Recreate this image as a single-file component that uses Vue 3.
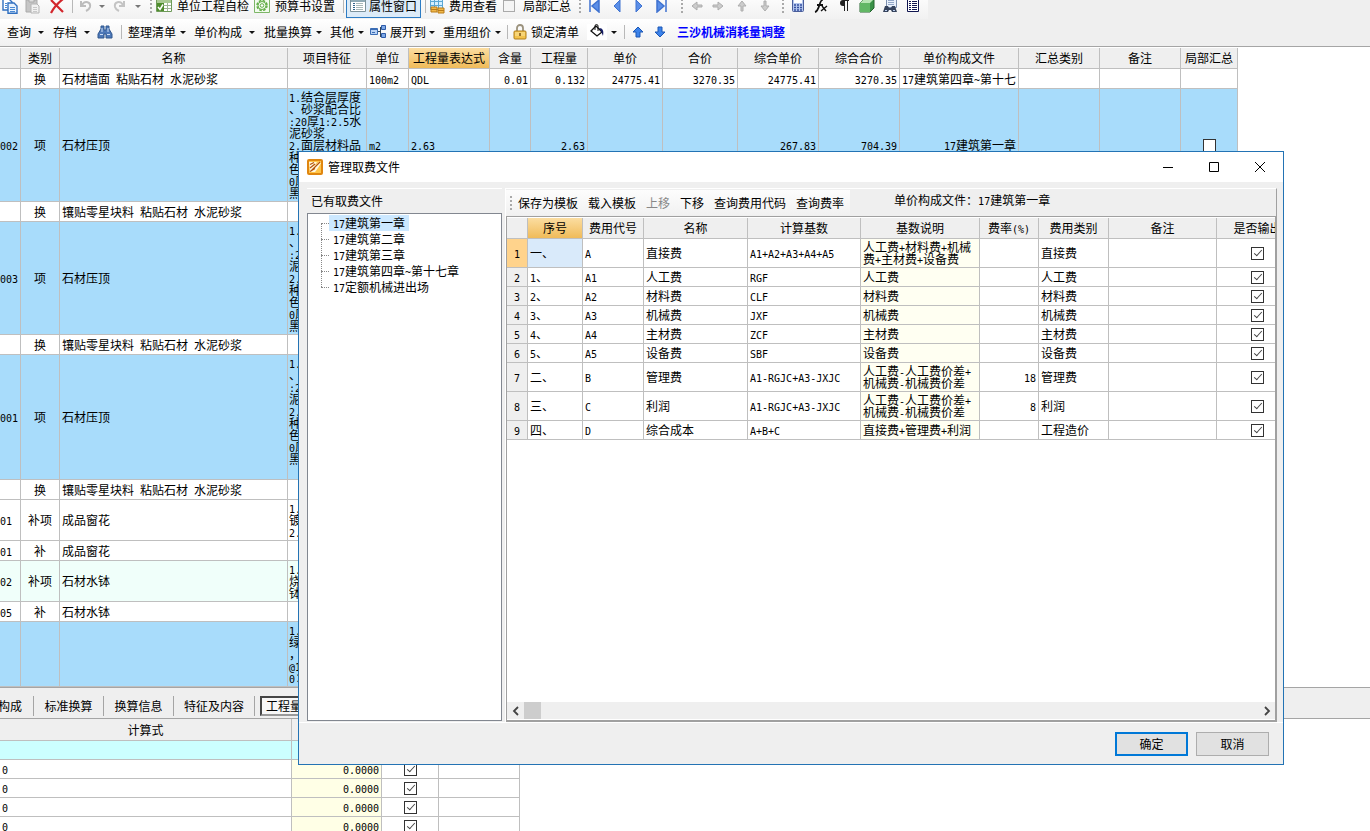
<script setup>
import { h, ref } from 'vue'

// Sets runs of Latin characters in a half-width face beside the full-width CJK text.
const Mix = (props) =>
  String(props.text ?? '')
    .split(/([\x20-\x7e]+)/)
    .filter(Boolean)
    .map((part) => (/^[\x20-\x7e]/.test(part) ? h('span', { class: 'latin' }, part) : part))
Mix.props = ['text']

const mainCols = ['', '类别', '名称', '项目特征', '单位', '工程量表达式', '含量', '工程量', '单价', '合价', '综合单价', '综合合价', '单价构成文件', '汇总类别', '备注', '局部汇总']
const feature = ['1.结合层厚度', '、砂浆配合比', ':20厚1:2.5水', '泥砂浆', '2.面层材料品', '种', '色', '0厚', '黑']
const item = (code, kind, name, cls, lines = [], rest = {}) => ({ code, kind, name, cls, lines, rest })
const mainRows = [
  item('', '换', '石材墙面 粘贴石材 水泥砂浆', 'h20', [], { unit: '100m2', expr: 'QDL', rate: '0.01', qty: '0.132', price: '24775.41', total: '3270.35', cprice: '24775.41', ctotal: '3270.35', file: '17建筑第四章~第十七' }),
  item('002', '项', '石材压顶', 'h113 blue', feature, { unit: 'm2', expr: '2.63', qty: '2.63', cprice: '267.83', ctotal: '704.39', file: '17建筑第一章', box: true }),
  item('', '换', '镶贴零星块料 粘贴石材 水泥砂浆', 'h20'),
  item('003', '项', '石材压顶', 'h113 blue', feature),
  item('', '换', '镶贴零星块料 粘贴石材 水泥砂浆', 'h20'),
  item('001', '项', '石材压顶', 'h125 blue', feature),
  item('', '换', '镶贴零星块料 粘贴石材 水泥砂浆', 'h20'),
  item('01', '补项', '成品窗花', 'h41', ['1.', '镀', '2.']),
  item('01', '补', '成品窗花', 'h20'),
  item('02', '补项', '石材水钵', 'h41 mint', ['1.', '烧', '钵']),
  item('05', '补', '石材水钵', 'h20'),
  item('', '', '', 'h64 blue', ['1.', '绿', '，', '@1', '0×'])
]

const files = ['17建筑第一章', '17建筑第二章', '17建筑第三章', '17建筑第四章~第十七章', '17定额机械进出场']
const selectedFile = ref(0)

const feeCols = ['', '序号', '费用代号', '名称', '计算基数', '基数说明', '费率(%)', '费用类别', '备注', '是否输出']
const fees = ref([
  { no: '一、', code: 'A', name: '直接费', base: 'A1+A2+A3+A4+A5', note: ['人工费+材料费+机械', '费+主材费+设备费'], rate: '', kind: '直接费', out: true },
  { no: '1、', code: 'A1', name: '人工费', base: 'RGF', note: ['人工费'], rate: '', kind: '人工费', out: true },
  { no: '2、', code: 'A2', name: '材料费', base: 'CLF', note: ['材料费'], rate: '', kind: '材料费', out: true },
  { no: '3、', code: 'A3', name: '机械费', base: 'JXF', note: ['机械费'], rate: '', kind: '机械费', out: true },
  { no: '4、', code: 'A4', name: '主材费', base: 'ZCF', note: ['主材费'], rate: '', kind: '主材费', out: true },
  { no: '5、', code: 'A5', name: '设备费', base: 'SBF', note: ['设备费'], rate: '', kind: '设备费', out: true },
  { no: '二、', code: 'B', name: '管理费', base: 'A1-RGJC+A3-JXJC', note: ['人工费-人工费价差+', '机械费-机械费价差'], rate: '18', kind: '管理费', out: true },
  { no: '三、', code: 'C', name: '利润', base: 'A1-RGJC+A3-JXJC', note: ['人工费-人工费价差+', '机械费-机械费价差'], rate: '8', kind: '利润', out: true },
  { no: '四、', code: 'D', name: '综合成本', base: 'A+B+C', note: ['直接费+管理费+利润'], rate: '', kind: '工程造价', out: true }
])
const calcRows = ref([{ on: true }, { on: true }, { on: true }, { on: true }])
</script>

<template>
  <div class="app">
    <header class="bars">
      <div class="bar bar-one" role="toolbar" aria-label="编辑">
        <button aria-label="复制"><svg width="16" height="16" viewBox="0 0 16 16"><path d="M1 1h6l3 3v8H1z" fill="#fff" stroke="#2f6fc0" stroke-width="1.4" /><path d="M6 5h6l3 3v7.300H6z" fill="#e6f1fd" stroke="#2f6fc0" stroke-width="1.400" /><path d="M8 9.500h5M8 11.500h5M8 13.500h5M3 5.500h2M3 7.500h2M3 9.500h2" stroke="#4a8ad4" /></svg></button>
        <button aria-label="粘贴"><svg width="16" height="16" viewBox="0 0 16 16"><path d="M1 2h11v12H1z" fill="#c5c5c5" stroke="#aaa" /><path d="M4 1h5v3H4z" fill="#ddd" stroke="#aaa" /><path d="M6 6h6l2 2v7H6z" fill="#f1f1f1" stroke="#b4b4b4" /><path d="M8 9.500h4M8 11.500h4M8 13.500h4" stroke="#c8c8c8" /></svg></button>
        <button aria-label="删除"><svg width="16" height="16" viewBox="0 0 16 16"><path d="M2 2l12 12M14 1C9 5 5 9 2 15" fill="none" stroke="#d3262c" stroke-width="2.200" /></svg></button>
        <i class="sep"></i>
        <button aria-label="撤销"><svg width="14" height="14" viewBox="0 0 14 14"><path d="M2 2v5h5M3 6c3-5 9-3 8 2-.5 2-2 3-4 4" fill="none" stroke="#bcbcbc" stroke-width="2" /></svg></button>
        <button aria-label="撤销列表"><i class="arrow dim"></i></button>
        <button aria-label="重做"><svg width="14" height="14" viewBox="0 0 14 14"><path d="M12 2v5H7M11 6C8 1 2 3 3 8c.5 2 2 3 4 4" fill="none" stroke="#c4c4c4" stroke-width="2" /></svg></button>
        <button aria-label="重做列表"><i class="arrow dim"></i></button>
        <i class="grip"></i>
        <button class="txt"><svg width="18" height="16" viewBox="0 0 18 16"><path d="M1.500 1.500h15v12h-15z" fill="#fff" stroke="#6f9b5a" /><path d="M2 2h14v3H2z" fill="#a9c993" /><path d="M2 5h7v8H2z" fill="#4f8d2d" /><path d="M9 7.500h7M9 10.500h7M12.500 5v8" stroke="#9fb596" /><path d="M3 9l2 2.500L8 6.500" fill="none" stroke="#fff" stroke-width="1.500" /></svg>单位工程自检</button>
        <button class="txt"><svg width="18" height="16" viewBox="0 0 18 16"><path d="M1.500 .5h15v14h-15z" fill="#f2fbee" stroke="#7db667" /><circle cx="9" cy="7.500" r="5" fill="none" stroke="#62ad46" stroke-width="1.500" stroke-dasharray="2.600 1.330" /><circle cx="9" cy="7.500" r="4" fill="none" stroke="#62ad46" /><circle cx="9" cy="7.500" r="1.800" fill="#fff" stroke="#62ad46" /></svg>预算书设置</button>
        <i class="sep"></i>
        <button class="txt pressed"><svg width="16" height="14" viewBox="0 0 16 14"><path d="M.5 .5h15v12H.5z" fill="#fff" stroke="#7c929b" /><path d="M1 1h14v2H1z" fill="#8faab5" /><path d="M3 4.500h2M3 6.500h2M3 8.500h2M3 10.500h2" stroke="#34658b" /><path d="M6 4.500h7M6 6.500h7M6 8.500h7M6 10.500h7" stroke="#a9b9b9" /></svg>属性窗口</button>
        <i class="sep"></i>
        <button class="txt"><svg width="16" height="16" viewBox="0 0 16 16"><path d="M1.500 .5h12v11h-12z" fill="#d3efff" stroke="#5aa7d4" /><path d="M1 3.500h12M1 7.500h12M5.500 1v11M9.500 1v11" stroke="#5aa7d4" /><path d="M2 9h6v5H2zM9 10h6v5H9z" fill="#f2b94b" stroke="#b97a16" /><path d="M2 11.500h6M9 12.500h6" stroke="#b97a16" /></svg><span>费用查看</span></button>
        <label class="check-label"><input type="checkbox" class="plain" />局部汇总</label>
        <i class="grip"></i>
        <button aria-label="首条"><svg width="14" height="14" viewBox="0 0 14 14"><path d="M3 1v12M12 1L5 7l7 6z" fill="#5b8fe8" stroke="#3f72d0" stroke-width="1.500" /></svg></button>
        <button aria-label="上一条"><svg width="14" height="14" viewBox="0 0 14 14"><path d="M10 1L4 7l6 6z" fill="#5b8fe8" stroke="#3f72d0" /></svg></button>
        <button aria-label="下一条"><svg width="14" height="14" viewBox="0 0 14 14"><path d="M4 1l6 6-6 6z" fill="#5b8fe8" stroke="#3f72d0" /></svg></button>
        <button aria-label="末条"><svg width="14" height="14" viewBox="0 0 14 14"><path d="M11 1v12M2 1l7 6-7 6z" fill="#5b8fe8" stroke="#3f72d0" stroke-width="1.500" /></svg></button>
        <i class="grip"></i>
        <button aria-label="左移"><svg width="12" height="12" viewBox="0 0 12 12"><path d="M1 6l5-4v3h5v2H6v3z" fill="#ccc" stroke="#adadad" /></svg></button>
        <button aria-label="右移"><svg width="12" height="12" viewBox="0 0 12 12"><path d="M11 6L6 2v3H1v2h5v3z" fill="#ccc" stroke="#adadad" /></svg></button>
        <button aria-label="上移"><svg width="12" height="12" viewBox="0 0 12 12"><path d="M6 1L2 6h3v5h2V6h3z" fill="#ccc" stroke="#adadad" /></svg></button>
        <button aria-label="下移"><svg width="12" height="12" viewBox="0 0 12 12"><path d="M6 11L2 6h3V1h2v5h3z" fill="#ccc" stroke="#adadad" /></svg></button>
        <i class="grip"></i>
        <button aria-label="计算器"><svg width="14" height="16" viewBox="0 0 14 16"><rect x="1.500" y=".5" width="11" height="13" rx="1" fill="#b5c7ee" stroke="#4a5e9b" /><path d="M3 2h8v3H3z" fill="#fff" /><path d="M3 7h8M3 9.500h8M3 12h8" stroke="#3550a0" stroke-width="1.500" stroke-dasharray="2 1" /></svg></button>
        <button aria-label="函数"><svg width="14" height="16" viewBox="0 0 14 16"><path d="M9 2C5 1 6 13 1 14M3 7h6" fill="none" stroke="#111" stroke-width="1.800" /><path d="M8 8l4 5M13 8l-6 5" stroke="#111" stroke-width="1.400" /></svg></button>
        <button aria-label="段落"><svg width="12" height="16" viewBox="0 0 12 16"><path d="M11 2.500H5M6.500 3v10M9.500 3v10" fill="none" stroke="#222" /><path d="M7 2H5a3 3 0 000 6h2z" fill="#222" /></svg></button>
        <button aria-label="图形"><svg width="16" height="16" viewBox="0 0 16 16"><path d="M1 5l4-4h10v9l-4 4H1z" fill="#3a9147" stroke="#24642e" /><path d="M1 5l4-4h10l-4 4z" fill="#b8e5b4" /><path d="M1 5h10v9H1z" fill="#62b765" /></svg></button>
        <button aria-label="查找打印"><svg width="16" height="16" viewBox="0 0 16 16"><path d="M4.500 .5h10v9h-10z" fill="#e9f0fb" stroke="#7c8fae" /><path d="M6 2.500h6M6 4.500h6M6 6.500h6" stroke="#93a7c7" /><path d="M3 8h3l1 2h2l1-2h3l2 6h-5l-1-2H7l-1 2H1z" fill="#36435c" /><path d="M3 12.500h2M11 12.500h2" stroke="#bcd0ef" /></svg></button>
        <button aria-label="列表"><svg width="14" height="16" viewBox="0 0 14 16"><path d="M1.500 .5h11v13h-11z" fill="#fff" stroke="#111650" /><path d="M3 3.500h2M3 5.500h2M3 7.500h2M3 9.500h2M3 11.500h2M6 3.500h5M6 5.500h5M6 7.500h5M6 9.500h5M6 11.500h5" stroke="#111650" /></svg></button>
      </div>
      <div class="bar bar-two" role="toolbar" aria-label="功能">
        <button class="txt wide">查询<i class="arrow"></i></button>
        <button class="txt wide">存档<i class="arrow"></i></button>
        <button aria-label="查找"><svg width="16" height="16" viewBox="0 0 16 16"><path d="M4 2h3v4h2V2h3v3l3 5v4H9v-4H7v4H1v-4l3-5z" fill="#4d78b8" stroke="#31588f" /><path d="M3 10.500h3M10 10.500h3M5 4v4M11 4v4" stroke="#cfe0f6" /></svg></button>
        <i class="sep"></i>
        <button class="txt">整理清单<i class="arrow"></i></button>
        <button class="txt wide">单价构成<i class="arrow"></i></button>
        <button class="txt">批量换算<i class="arrow"></i></button>
        <button class="txt">其他<i class="arrow"></i></button>
        <button class="txt near"><svg width="18" height="16" viewBox="0 0 18 16"><path d="M1.500 4.500h7v6h-7z" fill="#b9d2f4" stroke="#3b6db5" /><path d="M1 5.500h7M3 8.500h3" stroke="#3b6db5" /><path d="M9 7.500h3M11.500 3v10" stroke="#345" /><path d="M12.500 1.500h4v4h-4zM12.500 9.500h4v4h-4z" fill="#7fa9e6" stroke="#2c5aa8" /></svg>展开到<i class="arrow"></i></button>
        <button class="txt">重用组价<i class="arrow"></i></button>
        <i class="sep"></i>
        <button class="txt"><svg width="14" height="16" viewBox="0 0 14 16"><path d="M4 8V4a3 3 0 016 0v4" fill="none" stroke="#9b927d" stroke-width="1.800" /><rect x="1" y="7" width="12" height="8" rx="1" fill="#f3c34d" stroke="#b07d18" /><path d="M2 9h10M2 11h10" stroke="#fbe6a3" /><path d="M7 9v3" stroke="#7b5311" stroke-width="1.500" /></svg><span>锁定清单</span></button>
        <button class="bucket" aria-label="填充颜色"><svg width="16" height="16" viewBox="0 0 16 16"><path d="M7 2l6 6-5 4-6-5z" fill="#fff" stroke="#111" stroke-width="1.300" /><path d="M6 6V2a1.500 1.500 0 013 0v5" fill="none" stroke="#111" /><path d="M10 4c4 0 5 3 4 8l-2-5z" fill="#141c64" /></svg></button>
        <button aria-label="颜色列表"><i class="arrow"></i></button>
        <i class="sep"></i>
        <button aria-label="上移"><svg width="12" height="12" viewBox="0 0 12 12"><path d="M6 1L1 6h3v5h4V6h3z" fill="#3c83ea" stroke="#1b56b5" /></svg></button>
        <button aria-label="下移"><svg width="12" height="12" viewBox="0 0 12 12"><path d="M6 11L1 6h3V1h4v5h3z" fill="#3c83ea" stroke="#1b56b5" /></svg></button>
        <a href="#" class="adjust">三沙机械消耗量调整</a>
      </div>
    </header>

    <main class="sheet">
      <table class="grid main-grid">
        <colgroup><col v-for="(c, i) in mainCols" :key="i" :class="'m' + i" /></colgroup>
        <thead>
          <tr><th v-for="(c, i) in mainCols" :key="i" :class="{ hot: i === 5 }">{{ c }}</th></tr>
        </thead>
        <tbody>
          <tr v-for="(r, i) in mainRows" :key="i" :class="r.cls">
            <td class="flush"><Mix :text="r.code" /></td>
            <td class="mid">{{ r.kind }}</td>
            <td><Mix :text="r.name" /></td>
            <td class="lines"><div v-for="(l, k) in r.lines" :key="k"><Mix :text="l" /></div></td>
            <td><Mix :text="r.rest.unit" /></td>
            <td><Mix :text="r.rest.expr" /></td>
            <td class="num"><Mix :text="r.rest.rate" /></td>
            <td class="num"><Mix :text="r.rest.qty" /></td>
            <td class="num"><Mix :text="r.rest.price" /></td>
            <td class="num"><Mix :text="r.rest.total" /></td>
            <td class="num"><Mix :text="r.rest.cprice" /></td>
            <td class="num"><Mix :text="r.rest.ctotal" /></td>
            <td class="num"><Mix :text="r.rest.file" /></td>
            <td></td>
            <td></td>
            <td class="mid"><input v-if="r.rest.box" type="checkbox" class="tick" aria-label="局部汇总" /></td>
          </tr>
        </tbody>
      </table>
    </main>

    <nav class="tabs">
      <button class="cut">构成</button>
      <button>标准换算</button>
      <button>换算信息</button>
      <button class="long">特征及内容</button>
      <button class="current">工程量</button>
    </nav>

    <section class="calc">
      <table class="grid calc-grid">
        <colgroup><col class="k0" /><col class="k1" /><col class="k2" /><col class="k3" /></colgroup>
        <thead><tr><th>计算式</th><th></th><th></th><th></th></tr></thead>
        <tbody>
          <tr class="cyan"><td></td><td></td><td></td><td></td></tr>
          <tr v-for="(r, i) in calcRows" :key="i">
            <td><Mix text="0" /></td>
            <td class="num cream"><Mix text="0.0000" /></td>
            <td class="mid"><input v-model="r.on" type="checkbox" class="tick" aria-label="累加" /></td>
            <td></td>
          </tr>
        </tbody>
      </table>
    </section>

    <div class="dialog" role="dialog" aria-labelledby="dlg-title">
      <div class="title">
        <svg width="16" height="16" viewBox="0 0 16 16"><rect x="0" y="0" width="16" height="16" rx="2" fill="#e0860f" /><path d="M2 2h12v12H2z" fill="#ffc54a" /><path d="M2 3h8l-3 4 5-4 2 1-3 5-3 4H3z" fill="#fff7df" /><path d="M3 5.500l4-2M3 9l5-4M4 12L13 3M3 12.500l5-3" stroke="#b4540c" stroke-width="1.200" /></svg>
        <h1 id="dlg-title">管理取费文件</h1>
        <button aria-label="最小化"><svg width="12" height="12" viewBox="0 0 12 12"><path d="M1 6.500h10" stroke="#000" /></svg></button>
        <button aria-label="最大化"><svg width="12" height="12" viewBox="0 0 12 12"><path d="M1.500 1.500h9v9h-9z" fill="none" stroke="#000" /></svg></button>
        <button aria-label="关闭"><svg width="12" height="12" viewBox="0 0 12 12"><path d="M1 1l10 10M11 1L1 11" stroke="#000" /></svg></button>
      </div>
      <div class="body">
        <aside class="left">
          <h2>已有取费文件</h2>
          <ul class="tree">
            <li v-for="(f, i) in files" :key="f">
              <button :class="{ on: i === selectedFile }" @click="selectedFile = i"><Mix :text="f" /></button>
            </li>
          </ul>
        </aside>
        <section class="right">
          <div class="tools">
            <div class="tool-strip">
              <i class="grip"></i>
              <button>保存为模板</button>
              <button>载入模板</button>
              <button disabled>上移</button>
              <button>下移</button>
              <button>查询费用代码</button>
              <button>查询费率</button>
            </div>
            <p>单价构成文件：<Mix :text="files[selectedFile]" /></p>
          </div>
          <div class="fee-pane">
            <div class="fee-scroll">
              <table class="grid fee-grid">
                <colgroup><col v-for="(c, i) in feeCols" :key="i" :class="'f' + i" /></colgroup>
                <thead>
                  <tr><th v-for="(c, i) in feeCols" :key="i" :class="{ hot: i === 1 }"><Mix :text="c" /></th></tr>
                </thead>
                <tbody>
                  <tr v-for="(r, i) in fees" :key="i" :class="{ tall: r.note.length > 1, active: i === 0 }">
                    <th scope="row"><Mix :text="i + 1" /></th>
                    <td class="no"><Mix :text="r.no" /></td>
                    <td><Mix :text="r.code" /></td>
                    <td>{{ r.name }}</td>
                    <td><Mix :text="r.base" /></td>
                    <td class="ivory"><div v-for="(l, k) in r.note" :key="k"><Mix :text="l" /></div></td>
                    <td class="num"><Mix :text="r.rate" /></td>
                    <td>{{ r.kind }}</td>
                    <td></td>
                    <td class="mid"><input v-model="r.out" type="checkbox" class="tick" :aria-label="'是否输出 ' + r.name" /></td>
                  </tr>
                </tbody>
              </table>
            </div>
            <div class="hscroll">
              <button aria-label="向左滚动"><svg width="8" height="10" viewBox="0 0 8 10"><path d="M6 1L2 5l4 4" fill="none" stroke="#444" stroke-width="1.800" /></svg></button>
              <i class="thumb"></i>
              <button class="end" aria-label="向右滚动"><svg width="8" height="10" viewBox="0 0 8 10"><path d="M2 1l4 4-4 4" fill="none" stroke="#444" stroke-width="1.800" /></svg></button>
            </div>
          </div>
        </section>
      </div>
      <div class="actions">
        <button class="ok">确定</button>
        <button>取消</button>
      </div>
    </div>
  </div>
</template>

<style>
body { background: #fff; }
.latin {
  font-family: "DejaVu Sans Mono", "Liberation Mono", monospace;
  font-size: 10px;
  line-height: 0;
  white-space: pre;
}
</style>

<style scoped>
.app {
  position: relative;
  height: 100vh;
  overflow: hidden;
  font: 12px/16px "Noto Sans CJK SC", "Liberation Sans", sans-serif;
  color: #000;
}
.app *, .app *::after, .app *::before { box-sizing: border-box; }
button {
  padding: 0;
  border: 0;
  background: none;
  font: inherit;
  color: inherit;
  white-space: nowrap;
}
svg { display: block; flex: none; }

.bars {
  height: 48px;
  overflow: hidden;
  background: #efefef;
  border-bottom: 1px solid #fff;
  box-shadow: inset 0 -1px #a5a5a5;
}
.bar {
  display: grid;
  align-items: center;
  width: max-content;
  height: 26px;
  background: linear-gradient(#fff, #f1f1f1);
}
.bar > button { display: flex; justify-content: center; align-items: center; }
.bar > .txt { justify-content: flex-start; gap: 4px; }
.bar > .txt.wide { gap: 7px; }
.bar > .txt.near { gap: 3px; }
.bar-one {
  margin-top: -7px;
  grid-template-columns: 20px 25px 24px 6px 21px 12px 22px 16px 9px 98px 87px 6px 75px 8px 72px 75px 8px 20px 26px 18px 28px 12px 18px 24px 24px 22px 14px 16px 30px 16px 30px 16px 30px;
}
.bar-two {
  padding-left: 7px;
  grid-template-columns: 46px 42px 20px 13px 66px 70px 66px 39px 74px 59px 11px 74px 20px 13px 9px 18px 25px 118px;
}
.bar > .pressed {
  height: 23px;
  padding-left: 3px;
  gap: 3px;
  border: 1px solid #2d7cc4;
  background: #dcebf8;
}
.bucket { height: 16px; background: #fff; }
.sep { width: 1px; height: 14px; justify-self: center; background: #b8b8b8; }
.grip { width: 2px; height: 14px; justify-self: center; background: repeating-linear-gradient(#a9a9a9 0 2px, transparent 2px 4px); }
.arrow { border: 3px solid transparent; border-top-color: #111; border-bottom: 0; }
.arrow.dim { border-top-color: #777; }
.check-label { display: flex; align-items: center; gap: 8px; padding-left: 2px; white-space: nowrap; }
.plain { appearance: none; width: 12px; height: 12px; margin: 0; border: 1px solid #aaa; background: #f5f5f5; }
.adjust { padding-left: 5px; color: #00f; font-weight: 700; text-decoration: none; white-space: nowrap; }

.grid { border-collapse: separate; border-spacing: 0; table-layout: fixed; }
.grid th, .grid td {
  padding: 0 2px;
  border-right: 1px solid #bfbfbf;
  border-bottom: 1px solid #bfbfbf;
  overflow: hidden;
  white-space: nowrap;
  line-height: 12px;
  text-align: left;
  font-weight: 400;
}
.grid th { background: #efefef; text-align: center; }
.grid thead th { height: 21px; }
.grid .hot { background: linear-gradient(#fbdda1, #f0bb59); }
.grid .mid { text-align: center; }
.grid .num { text-align: right; }
.grid .flush { padding: 0; }
.tick {
  appearance: none;
  display: block;
  position: relative;
  width: 13px;
  height: 13px;
  margin: 0 auto;
  border: 1px solid #333;
  background: #fff;
}
.tick:checked::after {
  content: "";
  position: absolute;
  left: 4px;
  top: 0;
  width: 4px;
  height: 8px;
  border: solid #444;
  border-width: 0 1px 1px 0;
  transform: rotate(42deg);
}

.sheet { height: 639px; overflow: hidden; }
.main-grid { width: 1238px; }
.m0 { width: 21px; } .m1 { width: 39px; } .m2 { width: 228px; } .m3 { width: 79px; }
.m4 { width: 42px; } .m5, .m10, .m11, .m13, .m14 { width: 81px; } .m6 { width: 41px; }
.m7, .m15 { width: 57px; } .m8, .m9 { width: 75px; } .m12 { width: 119px; }
.main-grid .lines { vertical-align: top; padding: 2px 1px; }
.h20 td { height: 20px; } .h41 td { height: 41px; } .h64 td { height: 64px; }
.h113 td { height: 113px; } .h125 td { height: 125px; }
.blue td { background: #a8dcfb; }
.mint td { background: #f0fffa; }

.tabs {
  display: flex;
  align-items: center;
  height: 32px;
  padding-top: 6px;
  background: #efefef;
  border-top: 1px solid #a5a5a5;
  border-bottom: 1px solid #a5a5a5;
}
.tabs button { width: 70px; height: 20px; border-right: 1px solid #a5a5a5; }
.tabs .cut { width: 36px; margin-left: -2px; text-align: left; }
.tabs .long { width: 81px; }
.tabs .current { margin-left: 5px; width: 76px; padding-left: 4px; border: 2px inset #999; background: #f7f7f7; text-align: left; }
.calc-grid { width: 520px; }
.calc-grid thead th { height: 22px; }
.calc-grid td { height: 19px; }
.k0 { width: 292px; } .k1 { width: 90px; } .k2 { width: 57px; } .k3 { width: 81px; }
.cyan td { background: #cff; }
.grid .cream { background: #ffffe6; }

.dialog {
  position: absolute;
  left: 298px;
  right: 86px;
  top: 151px;
  bottom: 66px;
  display: flex;
  flex-direction: column;
  border: 1px solid #2373b4;
  background: #efefef;
}
.title { display: flex; align-items: center; height: 30px; padding-left: 8px; background: #fff; }
.title h1 { flex: 1; margin: 0 0 0 5px; font-size: 12px; font-weight: 400; }
.title button { display: flex; align-items: center; justify-content: center; width: 46px; height: 30px; }
.body { flex: 1; min-height: 0; display: flex; gap: 3px; padding: 6px 6px 0 8px; }
.left { width: 195px; display: flex; flex-direction: column; padding-bottom: 1px; }
.left h2 { height: 25px; margin: 0; padding-left: 4px; border-top: 1px solid #fff; font-size: 12px; line-height: 24px; font-weight: 400; }
.tree { flex: 1; margin: 0; padding: 1px 0 0 13px; border: 1px solid #828790; background: #fff; list-style: none; }
.tree li { position: relative; display: flex; height: 16px; padding-left: 8px; }
.tree li::before { content: ""; position: absolute; left: 0; top: 8px; width: 8px; border-top: 1px dotted #888; }
.tree li + li::after { content: ""; position: absolute; left: 0; top: -8px; height: 16px; border-left: 1px dotted #888; }
.tree button { padding: 0 4px; line-height: 16px; }
.tree .on { background: #cce8ff; }
.right { flex: 1; min-width: 0; display: flex; flex-direction: column; border-top: 1px solid #fff; border-right: 1px solid #a0a0a0; border-left: 1px solid #fff; }
.tools { display: flex; height: 27px; }
.tool-strip { display: flex; align-items: center; gap: 10px; height: 25px; margin-top: 1px; padding: 0 6px 0 4px; background: linear-gradient(#fdfdfd, #f1f1f1); }
.tool-strip .grip { margin-right: -4px; }
.tool-strip button:disabled { color: #888; }
.tools p { margin: 0 0 0 44px; line-height: 22px; white-space: nowrap; }
.fee-pane {
  flex: 1;
  min-height: 0;
  display: flex;
  flex-direction: column;
  border: 1px solid #a0a0a0;
  border-width: 1px 1px 2px 1px;
  padding: 1px 0 1px 0;
  background: #fff;
}
.fee-scroll { flex: 1; min-height: 0; overflow: hidden; }
.fee-grid { width: 792px; }
.f0 { width: 21px; } .f1 { width: 55px; } .f2 { width: 61px; } .f3 { width: 104px; } .f4 { width: 113px; }
.f5 { width: 119px; } .f6 { width: 59px; } .f7 { width: 70px; } .f8 { width: 108px; } .f9 { width: 82px; }
.fee-grid tbody td, .fee-grid tbody th { height: 19px; }
.fee-grid .tall td, .fee-grid .tall th { height: 29px; }
.fee-grid .active th { background: #ffd38c; }
.fee-grid .active .no { background: #d9eafa; }
.grid .ivory { background: #fffff2; }
.hscroll { display: flex; align-items: center; height: 17px; background: #efefef; }
.hscroll button { display: flex; align-items: center; justify-content: center; width: 17px; height: 17px; }
.hscroll .end { margin-left: auto; }
.thumb { width: 17px; height: 17px; background: #cdcdcd; }
.actions { display: flex; justify-content: flex-end; gap: 8px; height: 42px; padding: 9px 14px 0 0; border-top: 1px solid #fff; }
.actions button { width: 73px; height: 24px; border: 1px solid #adadad; background: #e1e1e1; }
.actions .ok { border: 2px solid #0078d7; }
</style>
